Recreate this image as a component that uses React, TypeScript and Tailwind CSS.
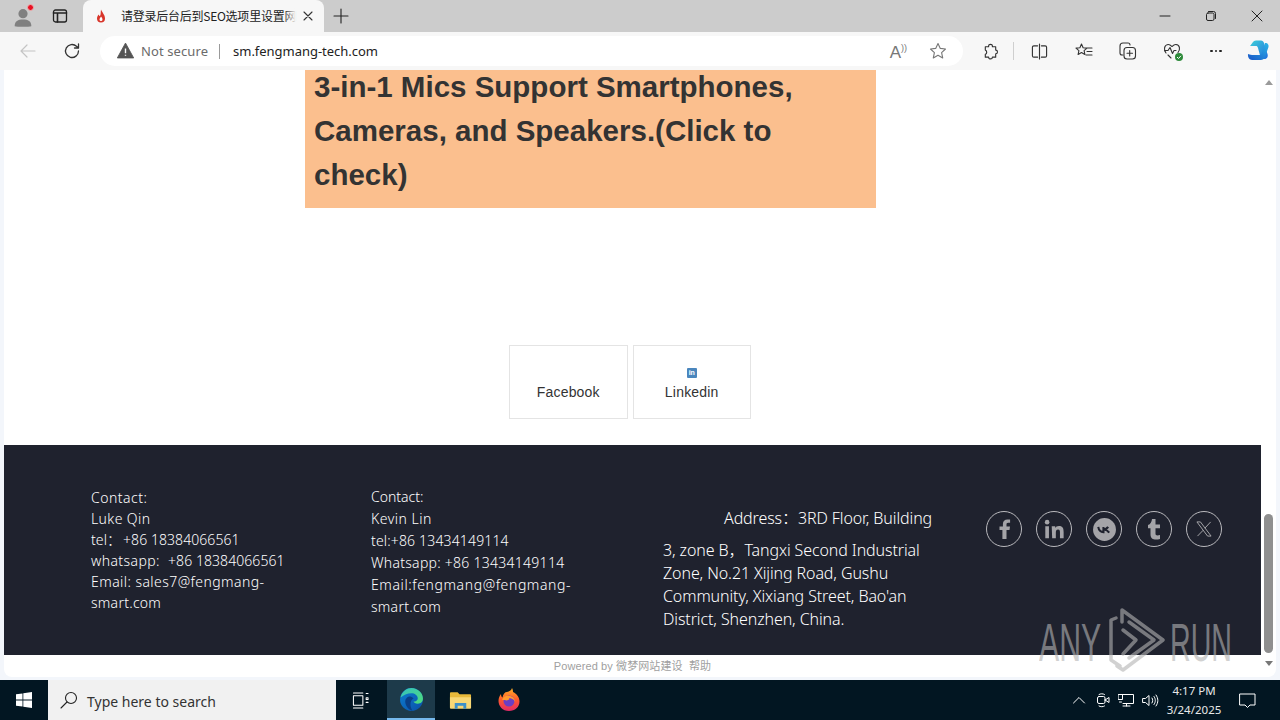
import React from "react";

const S = ({ c = "", children, vb = "0 0 24 24", sw = 1.5, stroke = "currentColor", fill = "none" }: any) => (
  <svg viewBox={vb} className={c} fill={fill} stroke={stroke} strokeWidth={sw} strokeLinecap="round" strokeLinejoin="round">{children}</svg>
);

function TabStrip() {
  return (
    <div className="h-[32px] bg-[#cccccc] flex items-end relative shrink-0">
      <div className="w-[42px] h-[32px] flex items-center justify-center relative">
        <svg viewBox="0 0 24 24" className="w-[20px] h-[22px] mt-[1px] ml-[3px]">
          <circle cx="12" cy="8" r="5.500" fill="#808080" />
          <path d="M2 23c0-6 4-8 10-8s10 2 10 8c-3 1-17 1-20 0z" fill="#808080" />
        </svg>
        <div className="absolute left-[27px] top-[4px] w-[7px] h-[7px] rounded-full bg-[#e81123] border border-[#e9b6b6]" />
      </div>
      <div className="w-[36px] h-[32px] flex items-center justify-center">
        <S c="w-[16px] h-[16px] text-[#222]" vb="0 0 16 16" sw={1.3}>
          <rect x="1.500" y="2" width="13" height="12" rx="2" />
          <path d="M1.500 5h13M5.500 5v9" strokeWidth="1.600" />
        </S>
      </div>
      <div className="ml-[5px] w-[241px] h-[32px] bg-[#f7f7f7] rounded-t-[8px] flex items-center pl-[12px] pr-[10px]">
        <svg viewBox="0 0 12 14" className="w-[12px] h-[15px] shrink-0">
          <path d="M6 0c1 3 4 5 4 9a4 4 0 0 1-8 0c0-2 1-3 1.500-4 .5 1 1 1.500 1.500 1.500C6 5 5.500 3 6 0z" fill="#d8352a" />
          <path d="M6 7c1 1 1.500 2 1.500 3a1.500 1.500 0 0 1-3 0c0-1 1-2 1.500-3z" fill="#fff" />
        </svg>
        <span className="relative ml-[14px] whitespace-nowrap text-[12px] tracking-[-0.25px] leading-[16px] text-[#222] font-['Noto_Sans_CJK_SC','Noto_Sans',sans-serif]">
          请登录后台后到SEO选项里设置网
          <span className="absolute right-0 top-0 w-[12px] h-[16px] bg-gradient-to-r from-transparent to-[#f7f7f7]" />
        </span>
        <S c="ml-auto w-[12px] h-[12px] text-[#333]" vb="0 0 12 12" sw={1.1}>
          <path d="M2 2l8 8M10 2l-8 8" />
        </S>
      </div>
      <div className="w-[34px] h-[32px] flex items-center justify-center">
        <S c="w-[16px] h-[16px] text-[#222]" vb="0 0 16 16" sw={1.1}><path d="M8 1v14M1 8h14" /></S>
      </div>
      <div className="ml-auto flex h-[32px] items-center text-[#222]">
        <div className="w-[46px] flex justify-center"><S c="w-[12px] h-[12px]" vb="0 0 12 12" sw={1}><path d="M1 6h10" /></S></div>
        <div className="w-[46px] flex justify-center"><S c="w-[12px] h-[12px]" vb="0 0 12 12" sw={1}><rect x="1.500" y="3" width="7.500" height="7.500" rx="1.500" /><path d="M3.500 1.500h5a2 2 0 0 1 2 2v5" /></S></div>
        <div className="w-[46px] flex justify-center"><S c="w-[12px] h-[12px]" vb="0 0 12 12" sw={1}><path d="M1 1l10 10M11 1L1 11" /></S></div>
      </div>
    </div>
  );
}

function Toolbar() {
  return (
    <div className="h-[38px] bg-[#f7f7f7] flex items-center shrink-0 text-[#333]">
      <div className="w-[56px] flex justify-center">
        <S c="w-[18px] h-[18px] text-[#c4c4c4]" vb="0 0 18 18" sw={1.2}><path d="M16 9H2M8 3L2 9l6 6" /></S>
      </div>
      <div className="w-[32px] flex justify-center">
        <S c="w-[18px] h-[18px] text-[#333]" vb="0 0 18 18" sw={1.3}><path d="M15.500 9a6.500 6.500 0 1 1-2-4.700L15.500 6M15.500 2v4h-4" /></S>
      </div>
      <div className="ml-[12px] w-[863px] h-[30px] bg-white rounded-full flex items-center pl-[17px] pr-[16px]">
        <svg viewBox="0 0 16 16" className="w-[17px] h-[17px] shrink-0 -mt-[1px]">
          <path d="M8 1L15.700 15H.3z" fill="#555" stroke="#555" strokeWidth="0.800" strokeLinejoin="round" />
          <path d="M8 6v4.500M8 12v1" stroke="#fff" strokeWidth="1.300" />
        </svg>
        <span className="ml-[7px] mt-[2px] text-[13px] text-[#6b6b6b] font-['Noto_Sans',sans-serif] tracking-[0.1px]">Not secure</span>
        <div className="ml-[11px] w-px h-[15px] bg-[#9a9a9a]" />
        <span className="ml-[13px] mt-[2px] text-[13px] text-[#222] font-['Noto_Sans',sans-serif] tracking-[-0.03px]">sm.fengmang-tech.com</span>
        <span className="ml-auto mr-[1px] text-[17px] leading-none text-[#777] font-['Liberation_Sans',sans-serif] relative top-[1px]">A<span className="text-[9px] relative -top-[7px]">))</span></span>
        <S c="ml-[21px] w-[18px] h-[18px] text-[#777]" vb="0 0 18 18" sw={1.1}><path d="M9 1.500l2.300 4.900 5.200.6-3.900 3.600 1.100 5.300L9 13.200l-4.700 2.700 1.100-5.300L1.500 7l5.200-.6z" /></S>
      </div>
      <div className="ml-[18px] w-[18px] flex justify-center">
        <S c="w-[17px] h-[17px] text-[#333]" vb="0 0 18 18" sw={1.2}><path d="M7 3c0-2 4-2 4 0v1h3.500v3.500c2.500 0 2.500 4 0 4V15H11c0 2.500-4 2.500-4 0H3.500v-3c2-.5 2-4 0-4.500V4H7z" /></S>
      </div>
      <div className="ml-[14px] w-px h-[18px] bg-[#cfcfcf]" />
      <div className="ml-[16px] w-[18px] flex justify-center">
        <S c="w-[17px] h-[17px]" vb="0 0 18 18" sw={1.2}><path d="M7 3H3a1.500 1.500 0 0 0-1.500 1.500v9A1.500 1.500 0 0 0 3 15h4M11 3h4a1.500 1.500 0 0 1 1.500 1.500v9A1.500 1.500 0 0 1 15 15h-4M9 1v16" /></S>
      </div>
      <div className="ml-[27px] w-[18px] flex justify-center">
        <S c="w-[18px] h-[18px]" vb="0 0 18 18" sw={1.1}><path d="M6.500 2l1.600 3.700 3.900.4-2.900 2.600.8 3.800-3.400-2-3.400 2 .8-3.800L1 6.100l3.900-.4zM12 6h5M12 9.500h5M11 13h6" /></S>
      </div>
      <div className="ml-[26px] w-[18px] flex justify-center">
        <S c="w-[18px] h-[18px]" vb="0 0 18 18" sw={1.1}><path d="M4 13H3a2 2 0 0 1-2-2V4a3 3 0 0 1 3-3h5a2 2 0 0 1 2 2" /><rect x="5" y="5.500" width="11.500" height="11.500" rx="3" /><path d="M10.700 8.500v5.500M8 11.200h5.500" /></S>
      </div>
      <div className="ml-[26px] w-[18px] relative flex justify-center">
        <S c="w-[18px] h-[18px]" vb="0 0 18 18" sw={1.1}><path d="M3 11C.5 8 1 3 5 2.500c2-.2 3 1 4 2 1-1 2-2.200 4-2 4 .5 4.500 5 2 8M1.500 8.500H5l2-3 2.500 6 1.500-3h2M5 13l3 3" /></S>
        <svg viewBox="0 0 8 8" className="absolute right-[-2px] bottom-[-1px] w-[8px] h-[8px]">
          <circle cx="4" cy="4" r="4" fill="#2d8a3a" />
          <path d="M2 4l1.500 1.500L6 2.800" stroke="#fff" strokeWidth="1" fill="none" />
        </svg>
      </div>
      <div className="ml-[26px] w-[18px] flex justify-center gap-[2px]">
        <div className="w-[2.500px] h-[2.500px] rounded-full bg-[#222] shrink-0" />
        <div className="w-[2.500px] h-[2.500px] rounded-full bg-[#222] shrink-0" />
        <div className="w-[2.500px] h-[2.500px] rounded-full bg-[#222] shrink-0" />
      </div>
      <div className="ml-[22px] w-[24px] flex justify-center">
        <svg viewBox="0 0 24 24" className="w-[24px] h-[24px]">
          <defs>
            <linearGradient id="cp1" x1="0" y1="0" x2="1" y2="1"><stop offset="0" stopColor="#3fd0d8" /><stop offset="1" stopColor="#1f6fe0" /></linearGradient>
            <linearGradient id="cp2" x1="1" y1="0" x2="0" y2="1"><stop offset="0" stopColor="#2bb5e8" /><stop offset="1" stopColor="#1a58c8" /></linearGradient>
          </defs>
          <path d="M9 1.500h5c1.500 0 2.500 1 3 2.500l3.500 11c1 3-1 5-3 5H14l-3-11c-.5-1.500-1-2-2-2H3C5 5 6 1.500 9 1.500z" fill="url(#cp1)" />
          <path d="M1 15c-.5 3 1.500 6 4 6h9c3 0 4-3 5-6l2.500-7c.5-2-1-4-2.500-4h-1l-3 10c-.5 1.500-1.500 2-3 2H5c-2 0-3-1-4-1z" fill="url(#cp2)" />
        </svg>
      </div>
    </div>
  );
}

const SocialBtn = ({ label, icon }: { label: string; icon?: boolean }) => (
  <div className="h-[74px] flex-1 border border-[#e4e4e4] flex flex-col items-center justify-end pb-[16px] text-[14px] tracking-[0.2px] leading-[20px] text-[#333] font-['Liberation_Sans',sans-serif]">
    {icon && (
      <div className="w-[10px] h-[10px] bg-[#4a86bd] rounded-[1px] mb-[4px] text-white text-[7px] leading-[10px] font-bold text-center tracking-normal">in</div>
    )}
    {label}
  </div>
);

const Circle = ({ children }: { children: React.ReactNode }) => (
  <div className="w-[36px] h-[36px] rounded-full border border-[#b9b9bd] flex items-center justify-center text-[#a4a4a8] shrink-0">
    {children}
  </div>
);

const foot = "text-white font-['Noto_Sans','Noto_Sans_CJK_SC',sans-serif] font-light";

function Footer() {
  return (
    <div className="h-[210px] bg-[#1f222e] flex shrink-0">
      <div className={`ml-[87px] mt-[41.500px] w-[200px] text-[14px] leading-[21px] whitespace-nowrap ${foot}`}>
        <div className="tracking-[0.5px]">Contact:</div>
        <div className="tracking-[0.4px]">Luke Qin</div>
        <div className="tracking-[0.07px]"><span className="inline-block w-[32px]">tel：</span>+86 18384066561</div>
        <div className="tracking-[0.07px]"><span className="inline-block w-[77px] tracking-[0.4px]">whatsapp:</span>+86 18384066561</div>
        <div className="tracking-[0.44px]">Email: sales7@fengmang-</div>
        <div className="tracking-[0.27px]">smart.com</div>
      </div>
      <div className={`ml-[80px] mt-[41px] w-[205px] text-[14px] leading-[22px] whitespace-nowrap ${foot}`}>
        <div>Contact:</div>
        <div className="tracking-[0.5px]">Kevin Lin</div>
        <div className="tracking-[0.16px]">tel:+86 13434149114</div>
        <div className="tracking-[0.27px]">Whatsapp: +86 13434149114</div>
        <div className="tracking-[0.6px]">Email:fengmang@fengmang-</div>
        <div className="tracking-[0.27px]">smart.com</div>
      </div>
      <div className={`ml-[87px] mt-[62px] w-[278px] text-[16px] tracking-[-0.1px] leading-[23px] ${foot}`}>
        <div className="pl-[61px] mb-[9px] whitespace-nowrap">Address：3RD Floor, Building</div>
        <div>3, zone B，Tangxi Second Industrial Zone, No.21 Xijing Road, Gushu Community, Xixiang Street, Bao'an District, Shenzhen, China.</div>
      </div>
      <div className="ml-[45px] mt-[66px] flex gap-[14px] h-[36px]">
        <Circle><svg viewBox="0 0 24 24" className="w-[24px] h-[24px]" fill="currentColor"><path d="M14.500 22v-9h3l.5-3.500h-3.500V7.500c0-1 .3-1.700 1.700-1.700h1.900V2.600c-.4-.1-1.500-.2-2.700-.2-2.700 0-4.500 1.600-4.500 4.600v2.500H7.500V13h2.900v9z" /></svg></Circle>
        <Circle><svg viewBox="0 0 24 24" className="w-[22px] h-[22px]" fill="currentColor"><circle cx="4.500" cy="4.500" r="2.500" /><path d="M2.500 9h4v13h-4zM9.500 9h3.800v1.800c.6-1 2-2.100 4.100-2.100 4.300 0 5.100 2.800 5.100 6.500V22h-4v-6c0-1.500 0-3.400-2.100-3.400s-2.400 1.600-2.400 3.300V22h-4z" /></svg></Circle>
        <Circle><svg viewBox="0 0 24 24" className="w-[25px] h-[25px]"><circle cx="12" cy="12" r="11" fill="currentColor" /><path d="M6 9.500c.5 3 2.500 5 5 5V9.500M11 12c2 0 3.500-1 4.500-2.500M11.500 12c2.500 .3 4 1.500 5 3" fill="none" stroke="#1f222e" strokeWidth="2" /></svg></Circle>
        <Circle><svg viewBox="0 0 24 24" className="w-[24px] h-[24px]" fill="currentColor"><path d="M10 2h3.500v5.500H18v3.700h-4.500v5.500c0 1.800 1.500 2 4.500 1.400V22c-5 1.200-9.500.6-9.500-4.500v-6.300H6V8c2.500-.8 3.700-3 4-6z" /></svg></Circle>
        <Circle><svg viewBox="0 0 24 24" className="w-[20px] h-[20px]" fill="none" stroke="currentColor" strokeWidth="1.200"><path d="M3.500 3.500h4.200l12.800 17h-4.200zM20 3.500l-7 7.500M11 13.500l-6.800 7" /></svg></Circle>
      </div>
    </div>
  );
}

function Scrollbar() {
  return (
    <div className="w-[15px] flex flex-col items-center">
      <div className="h-[22px] flex items-center justify-center pt-[3px]">
        <div className="w-0 h-0 border-x-[4px] border-x-transparent border-b-[5px] border-b-[#9a9a9a]" />
      </div>
      <div className="flex-1" />
      <div className="w-[9px] h-[139px] rounded-full bg-[#8f8f8f] mb-[6px]" />
      <div className="h-[18px] flex items-start justify-center pt-[2px]">
        <div className="w-0 h-0 border-x-[4px] border-x-transparent border-t-[5px] border-t-[#777]" />
      </div>
    </div>
  );
}

function Page() {
  return (
    <div className="h-[607px] bg-white mx-[4px] flex rounded-b-[8px] overflow-hidden shrink-0">
      <div className="w-[1257px] flex flex-col">
        <div className="ml-[301px] w-[571px] h-[138px] bg-[#fbbf8e] pl-[9px] pr-[50px] text-[29.500px] leading-[44px] font-bold text-[#333] font-['Liberation_Sans',sans-serif] shrink-0 overflow-hidden">
          <div className="-mt-[5px]">3-in-1 Mics Support Smartphones, Cameras, and Speakers.(Click to check)</div>
        </div>
        <div className="ml-[505px] mt-[137px] w-[242px] flex gap-[5px] shrink-0">
          <SocialBtn label="Facebook" />
          <SocialBtn label="Linkedin" icon />
        </div>
        <div className="h-[26px] shrink-0" />
        <Footer />
        <div className="pt-[4px] text-center text-[11px] tracking-[0.1px] leading-[15px] text-[#a0a0a0] font-['Liberation_Sans','Noto_Sans_CJK_SC',sans-serif]">
          Powered by 微梦网站建设&nbsp;&nbsp;帮助
        </div>
      </div>
      <Scrollbar />
    </div>
  );
}

function Taskbar() {
  return (
    <div className="h-[40px] mt-auto bg-[#021622] flex items-stretch shrink-0 text-white">
      <div className="w-[48px] flex items-center justify-center">
        <svg viewBox="0 0 16 16" className="w-[16px] h-[16px]" fill="#fff"><path d="M0 2.300l6.500-.9v6.200H0zM7.300 1.300L16 0v7.600H7.300zM0 8.400h6.500v6.200L0 13.700zM7.300 8.400H16V16l-8.700-1.300z" /></svg>
      </div>
      <div className="w-[288px] bg-[#f1f1f1] flex items-center pl-[12px]">
        <S c="w-[18px] h-[18px] text-[#222]" vb="0 0 18 18" sw={1.100}><circle cx="11" cy="7" r="5.500" /><path d="M7 11l-6 6" /></S>
        <span className="ml-[9px] mt-[2px] text-[14px] text-[#333] font-['Noto_Sans',sans-serif]">Type here to search</span>
      </div>
      <div className="w-[51px] flex items-center justify-center">
        <S c="w-[17px] h-[17px] text-white -ml-[3px]" vb="0 0 18 18" sw={1.100}><rect x="1.500" y="4" width="10" height="10" /><path d="M1.500 1h10M1.500 17h10M15 1.500h2M15 6h2v2h-2zM15 11h2" /></S>
      </div>
      <div className="w-[48px] bg-[#1d3a4a] border-b-[2px] border-[#76b9ed] flex items-center justify-center">
        <svg viewBox="0 0 24 24" className="w-[25px] h-[25px]">
          <defs>
            <linearGradient id="ed1" x1="0" y1="0" x2="1" y2="1"><stop offset="0" stopColor="#35c1c0" /><stop offset="1" stopColor="#4fdc7a" /></linearGradient>
            <linearGradient id="ed2" x1="0" y1="0" x2="1" y2="1"><stop offset="0" stopColor="#0d7fd0" /><stop offset="1" stopColor="#0a4fa8" /></linearGradient>
          </defs>
          <circle cx="12" cy="12" r="11" fill="url(#ed2)" />
          <path d="M1.500 10C3 4 8 1 12 1c6 0 11 5 11 10 0 3-2 5-5 5-2 0-4-1-4-2 2 0 4-1 4-3 0-3-3-5-6-5-4 0-8 2-10.500 4z" fill="url(#ed1)" />
          <path d="M11 9c-3 0-5 2-5 5 0 4 3 8 7 9-1-2-2-4-2-6 0-3 1-5 3-6-1-1-2-2-3-2z" fill="#0a3f86" />
        </svg>
      </div>
      <div className="w-[50px] flex items-center justify-center">
        <svg viewBox="0 0 24 20" className="w-[23px] h-[20px]">
          <path d="M1 3a1 1 0 0 1 1-1h7l2 2h11a1 1 0 0 1 1 1v13H1z" fill="#e8b93a" />
          <path d="M1 7h22v11a1 1 0 0 1-1 1H2a1 1 0 0 1-1-1z" fill="#f8d775" />
          <path d="M6 13h12v6h-3v-3H9v3H6z" fill="#3d90c9" />
        </svg>
      </div>
      <div className="w-[48px] flex items-center justify-center">
        <svg viewBox="0 0 24 24" className="w-[24px] h-[24px]">
          <defs>
            <linearGradient id="ff" x1="0.500" y1="0" x2="0.500" y2="1"><stop offset="0" stopColor="#ffb326" /><stop offset="0.500" stopColor="#ff5a2c" /><stop offset="1" stopColor="#e02a68" /></linearGradient>
          </defs>
          <path d="M12 23C5.500 23 1.500 18 1.500 13c0-3 1-5 2.500-7 0 2 .5 3 1.500 3.500C6 6 8 4 10 4c3-1 4.500-2 5-4 1 2 1 3 1 4 4 2 6.500 5.500 6.500 9.500C22.500 19 18 23 12 23z" fill="url(#ff)" />
          <circle cx="12" cy="13" r="5.500" fill="#6a3ec4" />
          <path d="M5 12c1-4 5-5 8-4 3 .5 5 3 5 6-1-3-4-4-6-4 1 1 0 2-1 2-1 1-3 0-6 0z" fill="#ff9a2e" />
        </svg>
      </div>
      <div className="ml-auto flex items-center">
        <S c="w-[14px] h-[14px]" vb="0 0 14 14" sw={1}><path d="M1.500 10L7 4.500 12.500 10" /></S>
        <S c="ml-[10px] w-[14px] h-[16px]" vb="0 0 14 16" sw={1}><rect x="1.500" y="4.500" width="7.500" height="7" rx="1.500" /><path d="M9 8l4-2.500v5L9 8M3 2.500c1.500-1 4-1 5.500 0M3 14c1.500 1 4 1 5.500 0" /></S>
        <S c="ml-[8px] w-[16px] h-[14px]" vb="0 0 16 14" sw={1}><path d="M4.500 1.500h11v9H5M8.500 10.500v2.500M5 13h7M.5 1.500h4v5h-4zM1.500 9h2" /></S>
        <S c="ml-[8px] w-[17px] h-[15px]" vb="0 0 17 15" sw={1}><path d="M1 5.500h2.500L7 2.500v10l-3.500-3H1zM10 5c1 1.500 1 3.500 0 5M12 3.500c1.800 2.500 1.800 5.500 0 8M14 2c2.500 3.500 2.500 7.500 0 11" /></S>
        <div className="ml-[2px] w-[66px] text-center text-[11.500px] leading-[20px] font-['Noto_Sans',sans-serif] text-[#e8e8e8]">
          <div className="-mb-[1px]">4:17 PM</div>
          <div>3/24/2025</div>
        </div>
        <div className="w-[40px] mr-[13px] flex justify-center">
          <S c="w-[17px] h-[17px]" vb="0 0 17 17" sw={1}><path d="M1 2h15v11h-5l-2.500 2.500L6 13H1z" /></S>
        </div>
      </div>
    </div>
  );
}

export default function App() {
  return (
    <div className="relative w-[1280px] h-[720px] overflow-hidden bg-[#f3f6fb] flex flex-col">
      <TabStrip />
      <Toolbar />
      <Page />
      <Taskbar />
      {/* ANY.RUN watermark overlay */}
      <div className="absolute left-[1039px] top-[608px] flex items-center opacity-60 text-[#b4b4b4] pointer-events-none">
        <span className="text-[53px] leading-none font-['Liberation_Sans',sans-serif] scale-x-[0.57] origin-left w-[66px] inline-block mt-[4px]">ANY</span>
        <svg viewBox="0 0 62 64" className="w-[62px] h-[64px]" fill="none" stroke="currentColor" strokeWidth="3.500" strokeLinejoin="round" strokeLinecap="round">
          <path d="M11 10L6 12v40l9 6" />
          <path d="M17 14V2l41 30-40 30-6-4" />
          <path d="M24 14l25 18-25 18M18 22l13 10-13 14" />
        </svg>
        <span className="text-[53px] leading-none font-['Liberation_Sans',sans-serif] scale-x-[0.54] origin-left w-[62px] inline-block mt-[4px] ml-[3px]">RUN</span>
      </div>
    </div>
  );
}
